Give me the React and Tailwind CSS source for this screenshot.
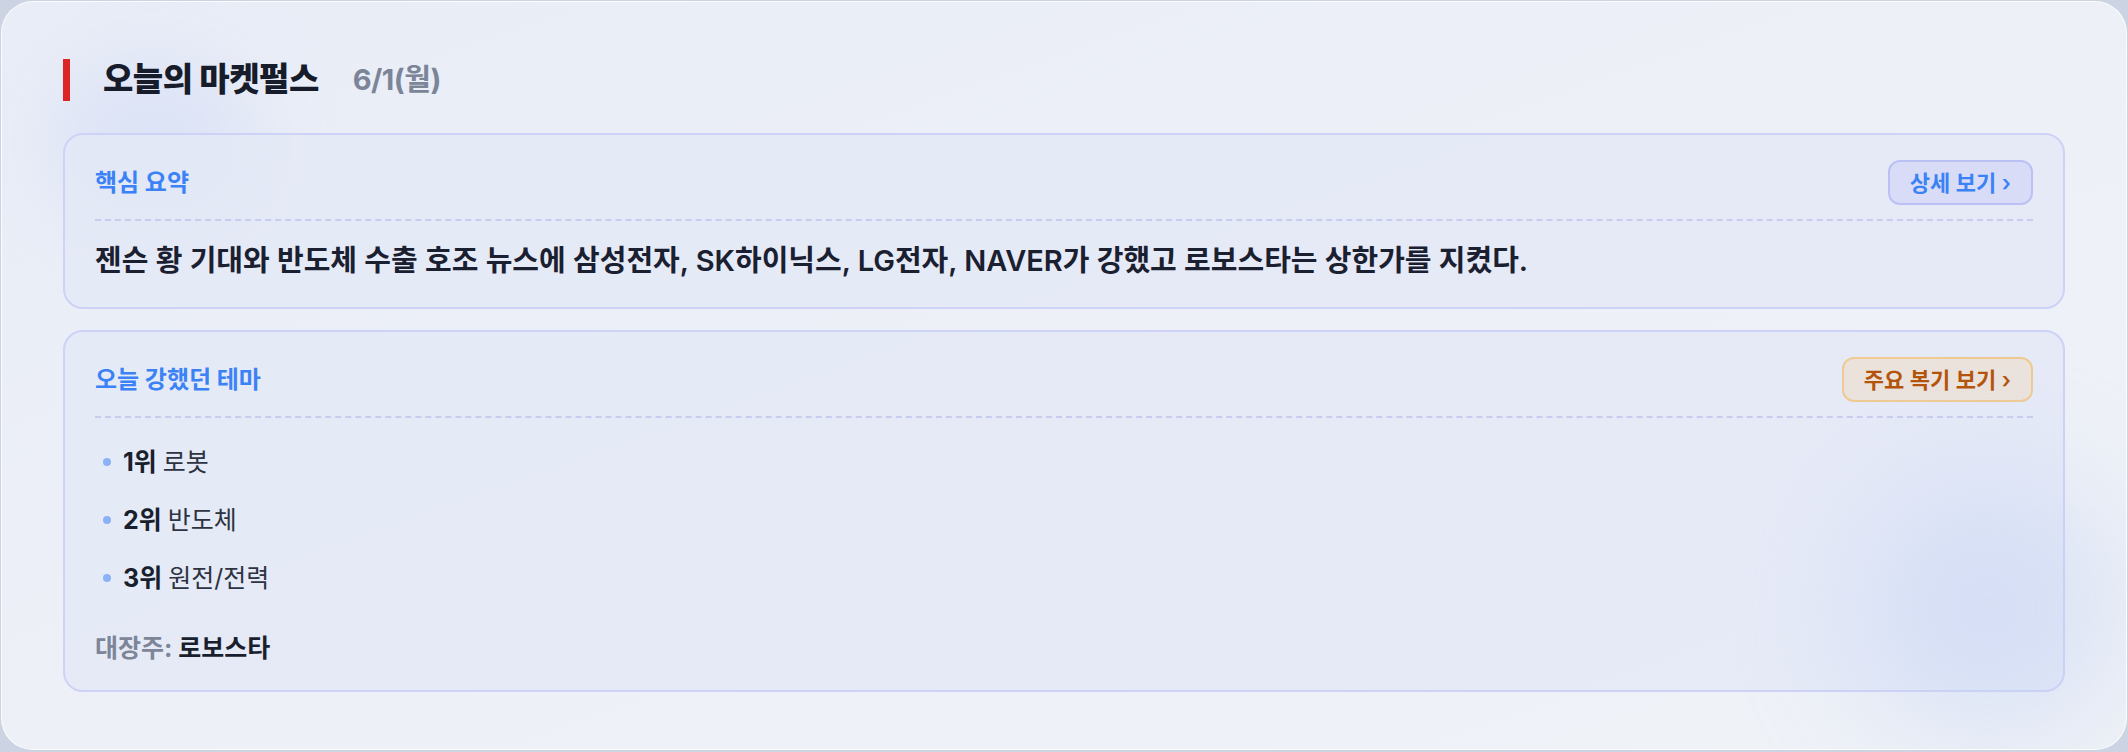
import React from "react";

const themes = [
  { rank: "1위", name: "로봇" },
  { rank: "2위", name: "반도체" },
  { rank: "3위", name: "원전/전력" },
];

const SectionCard = ({ title, action, actionClass, children, bodyClass }) => (
  <div className="relative rounded-[20px] border-2 border-[#cdd2f6] bg-[#e4e8f6]/80 px-[30px] pt-[25px]">
    <div className="flex items-center justify-between pb-[14px] border-b-2 border-dashed border-[#c8cdef]">
      <h2 className="text-[24px] font-bold text-[#3b82f6]">{title}</h2>
      <button
        className={
          "h-[45px] rounded-[12px] border-2 px-[20px] text-[22px] font-semibold leading-none " +
          actionClass
        }
      >
        {action}
      </button>
    </div>
    <div className={bodyClass}>{children}</div>
  </div>
);

export default function App() {
  return (
    <div
      className="w-full h-[752px] bg-[#ccd4e3] p-px"
      style={{ fontFamily: 'Inter, "Noto Sans CJK KR", sans-serif' }}
    >
      <div className="relative h-[749px] overflow-hidden rounded-[32px] border border-white/80 bg-gradient-to-br from-[#e9edf7] via-[#edf0f7] to-[#eff2f7] px-[61px] pt-[56px]">
        {/* soft glow behind content */}
        <div className="pointer-events-none absolute left-[50px] top-[60px] h-[160px] w-[200px] rounded-full bg-[#d6def6] opacity-70 blur-[40px]" />

        {/* Header */}
        <div className="relative flex h-[43px] items-center">
          <span className="h-[42px] w-[7px] bg-[#dc2626]" />
          <h1 className="ml-[33px] text-[33px] font-extrabold text-[#171c2b] tracking-[-0.5px]">
            오늘의 마켓펄스
          </h1>
          <span className="ml-[34px] text-[29px] font-bold text-[#7b8597] tracking-[-0.5px]">
            6/1(월)
          </span>
        </div>

        <div className="relative mt-[32px] flex flex-col gap-[21px]">
          <SectionCard
            title="핵심 요약"
            action="상세 보기 ›"
            actionClass="border-[#bcc1f5] bg-[#d9dcf7] text-[#3b82f6]"
            bodyClass="pt-[22px] pb-[28px]"
          >
            <p className="text-[29px] font-semibold leading-[36px] text-[#1b2030]">
              젠슨 황 기대와 반도체 수출 호조 뉴스에 삼성전자, SK하이닉스, LG전자, NAVER가 강했고 로보스타는 상한가를 지켰다.
            </p>
          </SectionCard>

          <SectionCard
            title="오늘 강했던 테마"
            action="주요 복기 보기 ›"
            actionClass="border-[#efca92] bg-[#ebe2dc] text-[#b45309]"
            bodyClass="pt-[26px] pb-[24px]"
          >
            <ul className="flex flex-col gap-[22px] pl-[8px]">
              {themes.map((t) => (
                <li key={t.rank} className="flex items-center text-[25px] leading-[36px]">
                  <span className="mr-[12px] h-[8px] w-[8px] rounded-full bg-[#8ab3f7]" />
                  <span className="font-bold text-[#1a1f2e]">{t.rank}</span>
                  <span className="ml-[6px] text-[#2d3340]">{t.name}</span>
                </li>
              ))}
            </ul>
            <p className="mt-[34px] text-[25px] font-bold leading-[36px]">
              <span className="text-[#7c8698]">대장주:</span>{" "}
              <span className="text-[#1a1f2e]">로보스타</span>
            </p>
          </SectionCard>
        </div>

        {/* soft glow over the bottom-right of the themes card */}
        <div className="pointer-events-none absolute left-[1850px] top-[470px] h-[270px] w-[270px] rounded-full bg-[#c2d1f4] opacity-45 blur-[60px]" />
      </div>
    </div>
  );
}
